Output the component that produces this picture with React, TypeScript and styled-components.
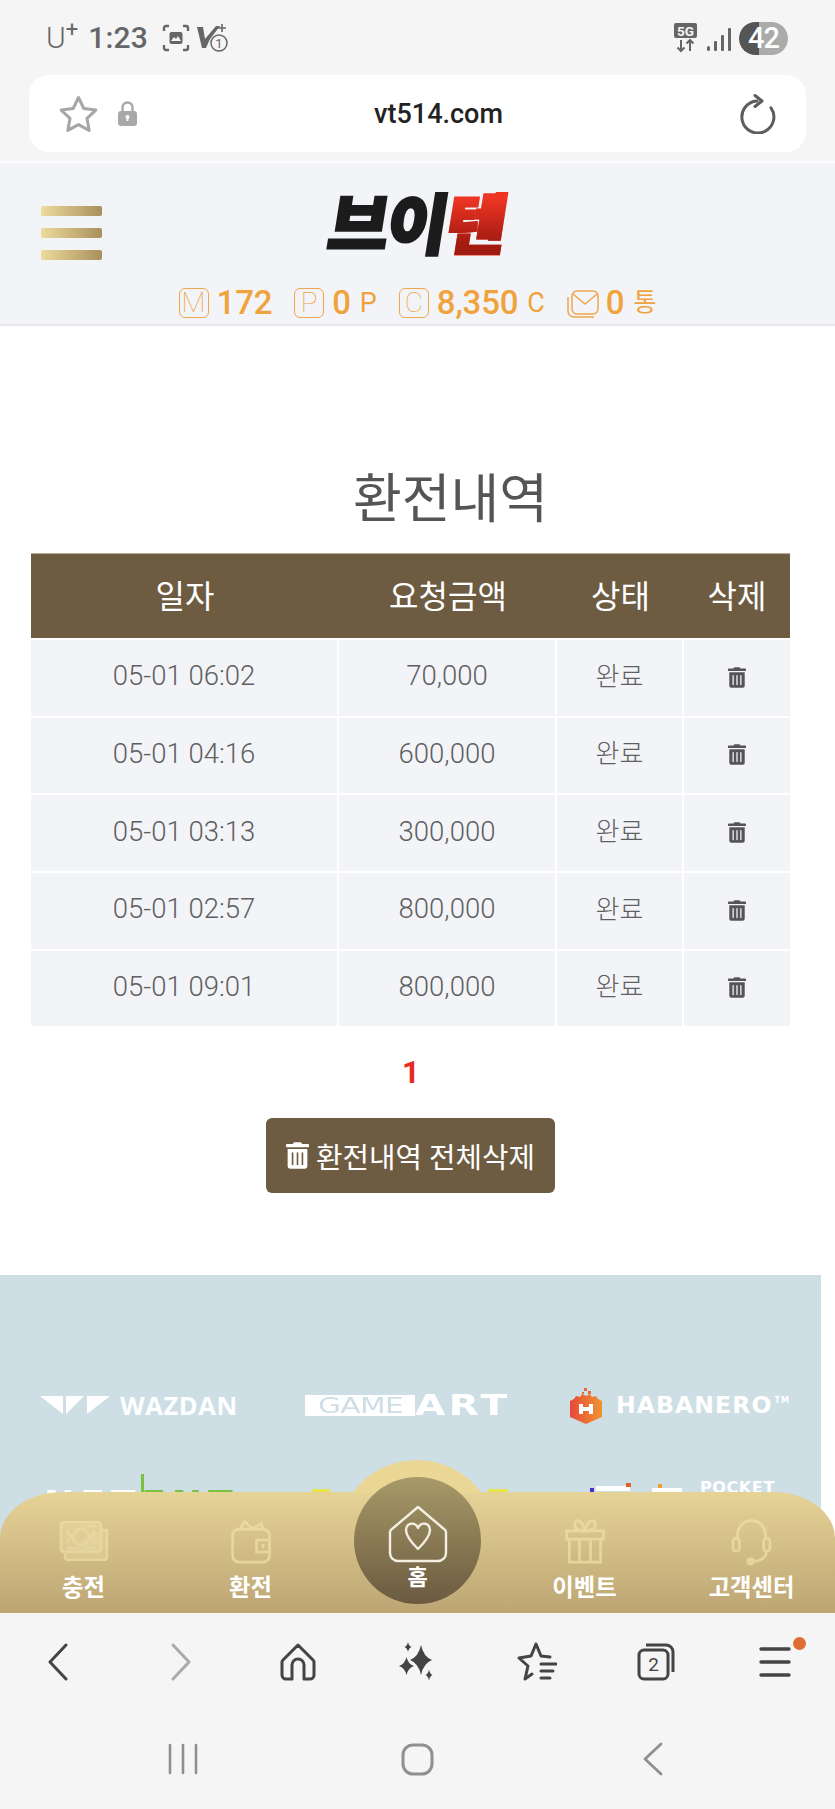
import React from "react";
import styled, { createGlobalStyle } from "styled-components";
import { FaTrashAlt } from "react-icons/fa";

const Global = createGlobalStyle`
  html, body { margin: 0; padding: 0; background: #fff; }
  * { box-sizing: border-box; }
`;

const KR = `Roboto, "Noto Sans CJK KR", sans-serif`;

const Page = styled.div`
  width: 835px;
  height: 1809px;
  display: flex;
  flex-direction: column;
  overflow: hidden;
  background: #f5f5f5;
  font-family: ${KR};
`;

const StatusBar = styled.div`
  height: 75px;
  flex: none;
  display: flex;
  align-items: center;
  justify-content: space-between;
  padding: 1px 47px 0 46px;
  color: #666;
`;
const StatusGroup = styled.div`
  display: flex;
  align-items: center;
`;
const Carrier = styled.span`
  font-size: 30px;
  font-weight: 300;
  line-height: 30px;
  margin-right: 10px;
  display: flex;
  align-items: flex-start;
  sup {
    font-size: 22px;
    line-height: 14px;
    font-weight: 400;
    vertical-align: top;
  }
`;
const Clock = styled.span`
  font-size: 30px;
  font-weight: 500;
  line-height: 30px;
  letter-spacing: 0.2px;
  margin-right: 14px;
`;
const CameraIcon = styled.svg`
  flex: none;
`;
const SimIcon = styled.svg`
  flex: none;
  margin-left: 6px;
`;
const SignalIcon = styled.svg`
  flex: none;
  margin: 4px 0 0 9px;
`;
const Battery = styled.span`
  width: 49px;
  height: 33px;
  border-radius: 17px;
  margin-left: 8px;
  display: flex;
  align-items: center;
  justify-content: center;
  color: #fff;
  font-size: 29px;
  font-weight: 500;
  letter-spacing: -1px;
  background: linear-gradient(90deg, #555 0 41%, #ababab 41% 100%);
`;

const AddressWrap = styled.div`
  flex: none;
  height: 88px;
  padding: 0 29px 11px;
  border-bottom: 2px solid #fbfbfb;
`;
const AddressBar = styled.div`
  height: 77px;
  background: #fff;
  border-radius: 20px;
  display: flex;
  align-items: center;
  padding: 0 30px;
`;
const AddressLeft = styled.div`
  width: 78px;
  display: flex;
  align-items: center;
  gap: 20px;
  svg { flex: none; }
`;
const Url = styled.div`
  flex: 1;
  text-align: center;
  font-size: 27px;
  font-weight: 500;
  color: #222;
  font-family: Roboto, sans-serif;
`;

const Site = styled.main`
  position: relative;
  flex: 1;
  min-height: 0;
  background: #fff;
  display: flex;
  flex-direction: column;
  overflow: hidden;
`;
const Header = styled.header`
  flex: none;
  height: 163px;
  background: #f2f4f7;
  border-bottom: 2px solid #e5e7ea;
  display: flex;
  flex-direction: column;
`;
const HeaderTop = styled.div`
  height: 125px;
  display: grid;
  grid-template-columns: 1fr auto 1fr;
  align-items: center;
  padding: 0 41px;
`;
const Burger = styled.div`
  display: flex;
  flex-direction: column;
  gap: 12px;
  width: 61px;
  margin-top: 14px;
`;
const BurgerBar = styled.i`
  display: block;
  height: 10px;
  border-radius: 2px;
  background: linear-gradient(90deg, #eddc9c, #a98f5d);
`;
const Logo = styled.div`
  display: flex;
  font-family: "Noto Sans CJK KR", sans-serif;
  font-size: 66px;
  line-height: 70px;
  font-weight: 900;
  letter-spacing: -2px;
  transform: skewX(-9deg) translateY(-6px);
  -webkit-text-stroke: 2.5px #1c1c1c;
  color: #1c1c1c;
`;
const LogoRed = styled.span`
  position: relative;
  color: #ee3524;
  -webkit-text-stroke: 2.5px #ee3524;
  &::after {
    content: "텐";
    position: absolute;
    left: 0;
    top: 0;
    color: #a01b11;
    -webkit-text-stroke: 2.5px #a01b11;
    -webkit-mask-image: linear-gradient(180deg, transparent 20%, #000 85%);
    mask-image: linear-gradient(180deg, transparent 20%, #000 85%);
  }
`;
const Stats = styled.div`
  display: flex;
  justify-content: center;
  gap: 22px;
  color: #f0a33c;
`;
const Stat = styled.div`
  display: flex;
  align-items: center;
  height: 30px;
`;
const StatBox = styled.span`
  width: 30px;
  height: 30px;
  border: 1.5px solid #f0a64c;
  border-radius: 6px;
  display: flex;
  align-items: center;
  justify-content: center;
  font-size: 28px;
  font-weight: 100;
  line-height: 26px;
  margin-right: 8px;
`;
const MailIcon = styled.svg`
  flex: none;
  margin-right: 7px;
`;
const StatValue = styled.span`
  font-size: 33px;
  font-weight: 500;
  line-height: 30px;
  letter-spacing: -0.2px;
`;
const StatUnit = styled.span<{ $small?: boolean }>`
  font-size: ${(p) => (p.$small ? 25 : 27)}px;
  font-weight: 400;
  line-height: 30px;
  margin-left: 9px;
`;

const Title = styled.h1`
  margin: 144px 0 23px;
  padding-left: 66px;
  text-align: center;
  font-size: 53px;
  line-height: 60px;
  font-weight: 400;
  color: #555;
`;
const TableWrap = styled.div`
  padding: 0 45px 0 31px;
`;
const Table = styled.table`
  width: 759px;
  table-layout: fixed;
  border-collapse: separate;
  border-spacing: 0;
`;
const Th = styled.th<{ $w: number }>`
  width: ${(p) => p.$w}px;
  height: 87px;
  padding: 0 0 4px;
  background: #6e5c42;
  border-top: 1px solid #b9ab92;
  border-bottom: 2px solid #fff;
  color: #fff;
  font-size: 32px;
  font-weight: 400;
`;
const Td = styled.td<{ $korean?: boolean }>`
  height: 77.66px;
  padding: 0 0 ${(p) => (p.$korean ? 7 : 4)}px;
  background: #f2f4f7;
  border-right: 2px solid #fff;
  border-bottom: 2px solid #fff;
  text-align: center;
  color: #5f5f5f;
  font-size: ${(p) => (p.$korean ? 26 : 27.5)}px;
  font-weight: 300;
  &:last-child { border-right: 0; }
  svg { width: 18px; height: 21px; display: block; margin: 3px auto 0; color: #555; }
`;
const Pager = styled.div`
  margin-top: 30px;
  height: 30px;
  line-height: 30px;
  text-align: center;
  color: #ea2a20;
  font-size: 31px;
  font-weight: 700;
  padding-right: 13px;
`;
const DeleteAll = styled.button`
  align-self: flex-start;
  margin: 30px 0 0 266px;
  width: 289px;
  height: 75px;
  background: #6e5c42;
  border: 0;
  border-radius: 6px;
  color: #fff;
  font-family: ${KR};
  font-size: 28.8px;
  display: flex;
  align-items: center;
  justify-content: center;
  gap: 7px;
  padding: 0;
  svg { width: 23px; height: 27px; }
`;

const Banner = styled.section`
  flex: 1;
  width: 821px;
  margin-top: 82px;
  background: #cddee5;
  padding: 112px 0 0 40px;
  display: grid;
  grid-template-columns: 265px 265px 1fr;
  grid-auto-rows: 36px;
  row-gap: 60px;
  align-content: start;
`;
const BrandCell = styled.div`
  display: flex;
  align-items: center;
  color: #fff;
  white-space: nowrap;
`;
const Wazdan = styled.span`
  font-family: "Open Sans", sans-serif;
  font-size: 25.5px;
  font-weight: 700;
  margin-left: 10px;
  letter-spacing: 0.6px;
`;
const GameBox = styled.span`
  width: 110px;
  height: 21px;
  background: #fff;
  color: #cddee5;
  display: flex;
  align-items: center;
  justify-content: center;
`;
const Wide = styled.span`
  display: inline-block;
  font-family: "DejaVu Sans", sans-serif;
  transform: scaleX(1.35);
`;
const GameText = styled(Wide)`
  font-size: 22px;
  line-height: 21px;
  font-weight: 400;
  letter-spacing: -0.5px;
`;
const Art = styled(Wide)`
  transform-origin: left center;
  font-size: 29px;
  font-weight: 700;
  letter-spacing: 2.5px;
  line-height: 21px;
`;
const Habanero = styled.span`
  font-family: "DejaVu Sans", sans-serif;
  font-size: 23.5px;
  font-weight: 700;
  margin-left: 14px;
  letter-spacing: 1.1px;
  sup { font-size: 8px; vertical-align: 10px; margin-left: 2px; }
`;
const NetEntRow = styled(BrandCell)`
  font-family: "DejaVu Sans", sans-serif;
  font-weight: 700;
  font-size: 36px;
  letter-spacing: 6px;
  padding-left: 4px;
  align-items: flex-start;
`;
const NetGreen = styled.span`
  position: relative;
  color: #79c043;
  &::before {
    content: "";
    position: absolute;
    left: 0;
    top: -9px;
    width: 3px;
    height: 20px;
    background: #79c043;
  }
`;
const YellowCell = styled(BrandCell)`
  align-items: flex-start;
  justify-content: space-between;
  width: 196px;
  margin-left: 7px;
  padding-top: 6px;
`;
const YellowTick = styled.i<{ $w: number }>`
  display: block;
  width: ${(p) => p.$w}px;
  height: 4px;
  background: #e9e34e;
`;
const PocketCell = styled(BrandCell)`
  align-items: flex-start;
  gap: 8px;
  padding-left: 20px;
`;
const PocketText = styled.span`
  font-family: "DejaVu Sans", sans-serif;
  font-weight: 700;
  font-size: 16px;
  letter-spacing: 0.6px;
  line-height: 16px;
  margin: -3px 0 0 2px;
`;

const BottomNav = styled.nav`
  position: absolute;
  left: 0;
  right: 0;
  bottom: 0;
  height: 121px;
  border-radius: 62px 62px 0 0 / 46px 46px 0 0;
  background: linear-gradient(180deg, #e6d396 0%, #bca573 100%);
  display: grid;
  grid-template-columns: repeat(5, 1fr);
`;
const Dome = styled.div`
  position: absolute;
  left: 337px;
  top: -32px;
  width: 160px;
  height: 33px;
  clip-path: circle(80px at 80px 80px);
  background: #ead796;
`;
const HomeCircle = styled.a`
  position: absolute;
  left: 354px;
  top: -15px;
  width: 127px;
  height: 127px;
  border-radius: 50%;
  background: linear-gradient(180deg, #a89a68 0%, #6a5a40 100%);
  display: flex;
  flex-direction: column;
  align-items: center;
  padding-top: 28px;
  z-index: 1;
`;
const NavItem = styled.a`
  position: relative;
  z-index: 2;
  display: flex;
  flex-direction: column;
  align-items: center;
  padding-top: 24px;
`;
const NavIconSlot = styled.span`
  height: 50px;
  display: flex;
  align-items: center;
  justify-content: center;
  opacity: 0.72;
`;
const NavLabel = styled.span`
  font-family: "Noto Sans CJK KR", sans-serif;
  font-size: 23.3px;
  font-weight: 700;
  line-height: 26px;
  color: #fff;
  margin-top: 7px;
`;
const HomeLabel = styled(NavLabel)`
  margin-top: 0;
  line-height: 24px;
  font-size: 22px;
`;

const Toolbar = styled.div`
  flex: none;
  height: 100px;
  border-top: 1px solid #fbfaf4;
  padding-bottom: 3px;
  display: grid;
  grid-template-columns: repeat(7, 1fr);
  align-items: center;
  justify-items: center;
`;
const BackChevron = styled.svg`
  margin-right: 4px;
`;
const ForwardChevron = styled.svg`
  margin-left: 4px;
`;
const MenuWrap = styled.div`
  position: relative;
  display: flex;
`;
const Dot = styled.i`
  position: absolute;
  right: -15px;
  top: -9px;
  width: 13px;
  height: 13px;
  border-radius: 50%;
  background: #e06c33;
`;
const SystemBar = styled.div`
  flex: none;
  height: 96px;
  padding: 0 64px 4px;
  display: grid;
  grid-template-columns: repeat(3, 1fr);
  align-items: center;
  justify-items: center;
`;
const RecentsIcon = styled.svg`
  margin-left: 3px;
`;

const rows = [
  ["05-01 06:02", "70,000"],
  ["05-01 04:16", "600,000"],
  ["05-01 03:13", "300,000"],
  ["05-01 02:57", "800,000"],
  ["05-01 09:01", "800,000"],
];

const Gold = "#eedfa9";

const CashIcon = () => (
  <svg width="50" height="40" viewBox="0 0 50 40" fill="none" stroke={Gold} strokeWidth="2.500">
    <rect x="2" y="1" width="40" height="30" rx="3" fill={Gold} fillOpacity="0.55" />
    <path d="M42 9h6v27a3 3 0 0 1-3 3H9a3 3 0 0 1-3-3v-5" fill={Gold} fillOpacity="0.5" />
    <circle cx="22" cy="16" r="8" />
    <path d="M8 10l4 6-4 6M36 10l-4 6 4 6M8 27h8M28 5h8M28 27h8" />
  </svg>
);
const WalletIcon = () => (
  <svg width="44" height="46" viewBox="0 0 46 50" fill="none" stroke={Gold} strokeWidth="3">
    <rect x="3" y="12" width="40" height="36" rx="7" />
    <path d="M11 12l5-8 9 8M25 12l9-6 2 6" />
    <rect x="29" y="24" width="14" height="13" />
    <path d="M36 28v5" />
  </svg>
);
const GiftIcon = () => (
  <svg width="42" height="46" viewBox="0 0 44 50" fill="none" stroke={Gold} strokeWidth="3">
    <rect x="2" y="14" width="40" height="9" />
    <path d="M5 23v25h34V23M16 23v25M28 23v25" />
    <path d="M22 14c-9 0-12-4-11-8 1-5 8-5 11 8zM22 14c9 0 12-4 11-8-1-5-8-5-11 8z" />
  </svg>
);
const HeadsetIcon = () => (
  <svg width="41" height="50" viewBox="0 0 44 54" fill="none" stroke={Gold} strokeWidth="3">
    <path d="M7 26V20a15 15 0 0 1 30 0v6" />
    <rect x="2" y="24" width="7" height="14" rx="3.500" />
    <rect x="35" y="24" width="7" height="14" rx="3.500" />
    <path d="M38 38c0 8-6 10-13 11" />
    <circle cx="21" cy="49" r="3" fill={Gold} />
  </svg>
);
const HomeHeart = () => (
  <svg width="60" height="58" viewBox="0 0 60 58" fill="none" stroke="#f4efe2" strokeWidth="2.400" strokeLinejoin="round">
    <path d="M30 2L56 24a4 4 0 0 1 2 4v20a8 8 0 0 1-8 8H10a8 8 0 0 1-8-8V28a4 4 0 0 1 2-4z" />
    <path d="M30 44C24 38 18 31 18 25c0-7 9-9 12-2 3-7 12-5 12 2 0 6-6 13-12 19z" />
  </svg>
);

const sparkle = (cx: number, cy: number, rx: number, ry: number) => {
  const kx = rx * 0.22;
  const ky = ry * 0.22;
  return `M${cx} ${cy - ry}Q${cx + kx} ${cy - ky} ${cx + rx} ${cy}Q${cx + kx} ${cy + ky} ${cx} ${cy + ry}Q${cx - kx} ${cy + ky} ${cx - rx} ${cy}Q${cx - kx} ${cy - ky} ${cx} ${cy - ry}Z`;
};

export default function App() {
  return (
    <Page>
      <Global />
      <StatusBar>
        <StatusGroup>
          <Carrier>U<sup>+</sup></Carrier>
          <Clock>1:23</Clock>
          <CameraIcon width="28" height="28" viewBox="0 0 28 28" fill="none" stroke="#666" strokeWidth="2.400">
            <path d="M7 2H4a2 2 0 0 0-2 2v3M21 2h3a2 2 0 0 1 2 2v3M7 26H4a2 2 0 0 1-2-2v-3M21 26h3a2 2 0 0 0 2-2v-3" />
            <rect x="7.500" y="8" width="13" height="12" rx="2" fill="#666" stroke="none" />
            <path d="M9 17l3-4 2 2 2-3 3 5z" fill="#f5f5f5" stroke="none" />
          </CameraIcon>
          <SimIcon width="32" height="30" viewBox="0 0 32 30">
            <path d="M1 4h6l2 12L20 3h4L14 16l-4 9H6z" fill="#666" />
            <path d="M26 1v8M22 5h8" stroke="#666" strokeWidth="1.600" />
            <circle cx="23" cy="20" r="8" fill="#f5f5f5" stroke="#666" strokeWidth="1.500" />
            <text x="23" y="25" textAnchor="middle" fontSize="13" fill="#666" fontFamily="Roboto">1</text>
          </SimIcon>
        </StatusGroup>
        <StatusGroup>
          <svg width="25" height="30" viewBox="0 0 25 30">
            <rect x="1" y="0" width="23" height="15" rx="2" fill="#666" />
            <text x="12.500" y="12.500" textAnchor="middle" fontSize="13.500" fontWeight="700" fill="#f5f5f5" fontFamily="Roboto">5G</text>
            <path d="M8 17v11M4.500 24.500L8 28l3.500-3.500M17 28V17M13.500 20.500L17 17l3.500 3.500" stroke="#666" strokeWidth="2" fill="none" />
          </svg>
          <SignalIcon width="24" height="24" viewBox="0 0 24 24" fill="#666">
            <rect x="0" y="18" width="3" height="5" rx="1.500" />
            <rect x="7" y="13" width="3" height="10" rx="1" />
            <rect x="14" y="7" width="3" height="16" rx="1" />
            <rect x="21" y="0" width="3" height="23" rx="1" />
          </SignalIcon>
          <Battery>42</Battery>
        </StatusGroup>
      </StatusBar>

      <AddressWrap>
        <AddressBar>
          <AddressLeft>
            <svg width="39" height="38" viewBox="0 0 39 38" fill="none" stroke="#a6a6a6" strokeWidth="3" strokeLinejoin="round">
              <path d="M19.500 2.500l5.300 11 12 1.600-8.800 8.300 2.200 12-10.700-5.800-10.700 5.800 2.200-12-8.800-8.300 12-1.600z" />
            </svg>
            <svg width="19" height="25" viewBox="0 0 19 25">
              <path d="M4.500 10V6.500a5 5 0 0 1 10 0V10" fill="none" stroke="#a8a8a8" strokeWidth="2.400" />
              <rect x="0" y="10" width="19" height="15" rx="3" fill="#a8a8a8" />
              <circle cx="9.500" cy="16" r="2" fill="#fff" />
              <rect x="8.600" y="16" width="1.800" height="4" fill="#fff" />
            </svg>
          </AddressLeft>
          <Url>vt514.com</Url>
          <svg width="36" height="40" viewBox="0 0 36 40" fill="none" stroke="#5d5d5d" strokeWidth="3" strokeLinecap="round" strokeLinejoin="round">
            <path d="M31 13.800A16 16 0 1 1 17 7" />
            <path d="M15 1.500l7 5.500-7 5.500" />
          </svg>
        </AddressBar>
      </AddressWrap>

      <Site>
        <Header>
          <HeaderTop>
            <Burger>
              <BurgerBar />
              <BurgerBar />
              <BurgerBar />
            </Burger>
            <Logo>
              브이<LogoRed>텐</LogoRed>
            </Logo>
          </HeaderTop>
          <Stats>
            <Stat>
              <StatBox>M</StatBox>
              <StatValue>172</StatValue>
            </Stat>
            <Stat>
              <StatBox>P</StatBox>
              <StatValue>0</StatValue>
              <StatUnit>P</StatUnit>
            </Stat>
            <Stat>
              <StatBox>C</StatBox>
              <StatValue>8,350</StatValue>
              <StatUnit>C</StatUnit>
            </Stat>
            <Stat>
              <MailIcon width="32" height="30" viewBox="0 0 32 30" fill="none" stroke="#f0a64c" strokeWidth="1.500">
                <rect x="5" y="3" width="26" height="23" rx="5" />
                <path d="M6 6l12 10L30 6" />
                <path d="M1 9v14a6 6 0 0 0 6 6h20" />
              </MailIcon>
              <StatValue>0</StatValue>
              <StatUnit $small>통</StatUnit>
            </Stat>
          </Stats>
        </Header>

        <Title>환전내역</Title>
        <TableWrap>
          <Table>
            <thead>
              <tr>
                <Th $w={308}>일자</Th>
                <Th $w={218}>요청금액</Th>
                <Th $w={127}>상태</Th>
                <Th $w={106}>삭제</Th>
              </tr>
            </thead>
            <tbody>
              {rows.map(([date, amount], i) => (
                <tr key={i}>
                  <Td>{date}</Td>
                  <Td>{amount}</Td>
                  <Td $korean>완료</Td>
                  <Td><FaTrashAlt /></Td>
                </tr>
              ))}
            </tbody>
          </Table>
        </TableWrap>
        <Pager>1</Pager>
        <DeleteAll>
          <FaTrashAlt />
          환전내역 전체삭제
        </DeleteAll>

        <Banner>
          <BrandCell>
            <svg width="70" height="18" viewBox="0 0 70 18" fill="#fff">
              <path d="M0 0h23v18zM26 18V0h18zM47 18V0h23z" />
            </svg>
            <Wazdan>WAZDAN</Wazdan>
          </BrandCell>
          <BrandCell>
            <GameBox><GameText>GAME</GameText></GameBox>
            <Art>ART</Art>
          </BrandCell>
          <BrandCell>
            <svg width="32" height="37" viewBox="0 0 32 37">
              <defs>
                <linearGradient id="hb" x1="0" x2="1">
                  <stop offset="0" stopColor="#e8483a" />
                  <stop offset="1" stopColor="#f0952e" />
                </linearGradient>
              </defs>
              <path d="M0 14l4-2 2-3 4 1 2-3 4 2 4-2 2 3 4-1 2 3 4 2v16l-16 7-16-7z" fill="url(#hb)" />
              <path d="M14 1h3v3h-3zM18 4h3v3h-3zM12 5h2v2h-2z" fill="#e8683a" />
              <path d="M9 17h4v3h6v-3h4v10h-4v-3h-6v3H9z" fill="#fff" />
            </svg>
            <Habanero>HABANERO<sup>TM</sup></Habanero>
          </BrandCell>
          <NetEntRow>
            NET<NetGreen>ENT</NetGreen>
          </NetEntRow>
          <YellowCell>
            <YellowTick $w={18} />
            <YellowTick $w={20} />
          </YellowCell>
          <PocketCell>
            <svg width="100" height="14" viewBox="0 0 100 14">
              <rect x="0" y="5" width="4" height="4" fill="#4b2fd0" />
              <rect x="6" y="3" width="34" height="5" fill="#fff" />
              <rect x="36" y="0" width="5" height="4" fill="#d9652b" />
              <rect x="62" y="5" width="30" height="4" fill="#fff" />
              <rect x="68" y="1" width="4" height="4" fill="#e9a030" />
            </svg>
            <PocketText>POCKET</PocketText>
          </PocketCell>
        </Banner>

        <BottomNav>
          <Dome />
          <HomeCircle>
            <HomeHeart />
            <HomeLabel>홈</HomeLabel>
          </HomeCircle>
          <NavItem><NavIconSlot><CashIcon /></NavIconSlot><NavLabel>충전</NavLabel></NavItem>
          <NavItem><NavIconSlot><WalletIcon /></NavIconSlot><NavLabel>환전</NavLabel></NavItem>
          <div />
          <NavItem><NavIconSlot><GiftIcon /></NavIconSlot><NavLabel>이벤트</NavLabel></NavItem>
          <NavItem><NavIconSlot><HeadsetIcon /></NavIconSlot><NavLabel>고객센터</NavLabel></NavItem>
        </BottomNav>
      </Site>

      <Toolbar>
        <BackChevron width="22" height="38" viewBox="0 0 22 38" fill="none" stroke="#444" strokeWidth="3" strokeLinecap="round" strokeLinejoin="round">
          <path d="M19 2L3 19l16 17" />
        </BackChevron>
        <ForwardChevron width="22" height="38" viewBox="0 0 22 38" fill="none" stroke="#aaa" strokeWidth="3" strokeLinecap="round" strokeLinejoin="round">
          <path d="M3 2l16 17L3 36" />
        </ForwardChevron>
        <svg width="36" height="38" viewBox="0 0 36 38" fill="none" stroke="#444" strokeWidth="3" strokeLinejoin="round">
          <path d="M18 2L33 17a3 3 0 0 1 1 2v13a4 4 0 0 1-4 4h-6V22a6 6 0 0 0-12 0v14H6a4 4 0 0 1-4-4V19a3 3 0 0 1 1-2z" />
        </svg>
        <svg width="36" height="40" viewBox="0 0 36 40" fill="#444">
          <path d={sparkle(22, 18, 11, 15)} />
          <path d={sparkle(7.5, 24, 7.5, 9)} />
          <path d={sparkle(9, 5, 3.5, 5)} />
          <path d={sparkle(30, 33, 3.5, 5.5)} />
        </svg>
        <svg width="40" height="40" viewBox="0 0 40 40" fill="none" stroke="#444" strokeWidth="3" strokeLinejoin="round" strokeLinecap="round">
          <path d="M33 15l-9-1L19 2l-5 12L2 16l9 8-3 13 7-5" />
          <path d="M24 22h15M24 29h12M24 36h9" />
        </svg>
        <svg width="38" height="38" viewBox="0 0 38 38" fill="none" stroke="#444" strokeWidth="3">
          <rect x="2" y="7" width="29" height="29" rx="5" />
          <path d="M9 2h20a7 7 0 0 1 7 7v20" />
          <text x="16.500" y="28" textAnchor="middle" fontSize="19" fill="#444" stroke="none" fontFamily="Roboto">2</text>
        </svg>
        <MenuWrap>
          <svg width="32" height="32" viewBox="0 0 32 32" stroke="#444" strokeWidth="3.400" strokeLinecap="round">
            <path d="M2 3h28M2 16h28M2 29h28" />
          </svg>
          <Dot />
        </MenuWrap>
      </Toolbar>

      <SystemBar>
        <RecentsIcon width="30" height="32" viewBox="0 0 30 32" stroke="#8f8f8f" strokeWidth="2.600" strokeLinecap="round">
          <path d="M2 2v28M15 2v28M28 2v28" />
        </RecentsIcon>
        <svg width="33" height="33" viewBox="0 0 33 33" fill="none" stroke="#8f8f8f" strokeWidth="3">
          <rect x="2" y="2" width="29" height="29" rx="10" />
        </svg>
        <svg width="22" height="34" viewBox="0 0 22 34" fill="none" stroke="#8f8f8f" strokeWidth="2.800" strokeLinecap="round" strokeLinejoin="round">
          <path d="M19 2L3 17l16 15" />
        </svg>
      </SystemBar>
    </Page>
  );
}
